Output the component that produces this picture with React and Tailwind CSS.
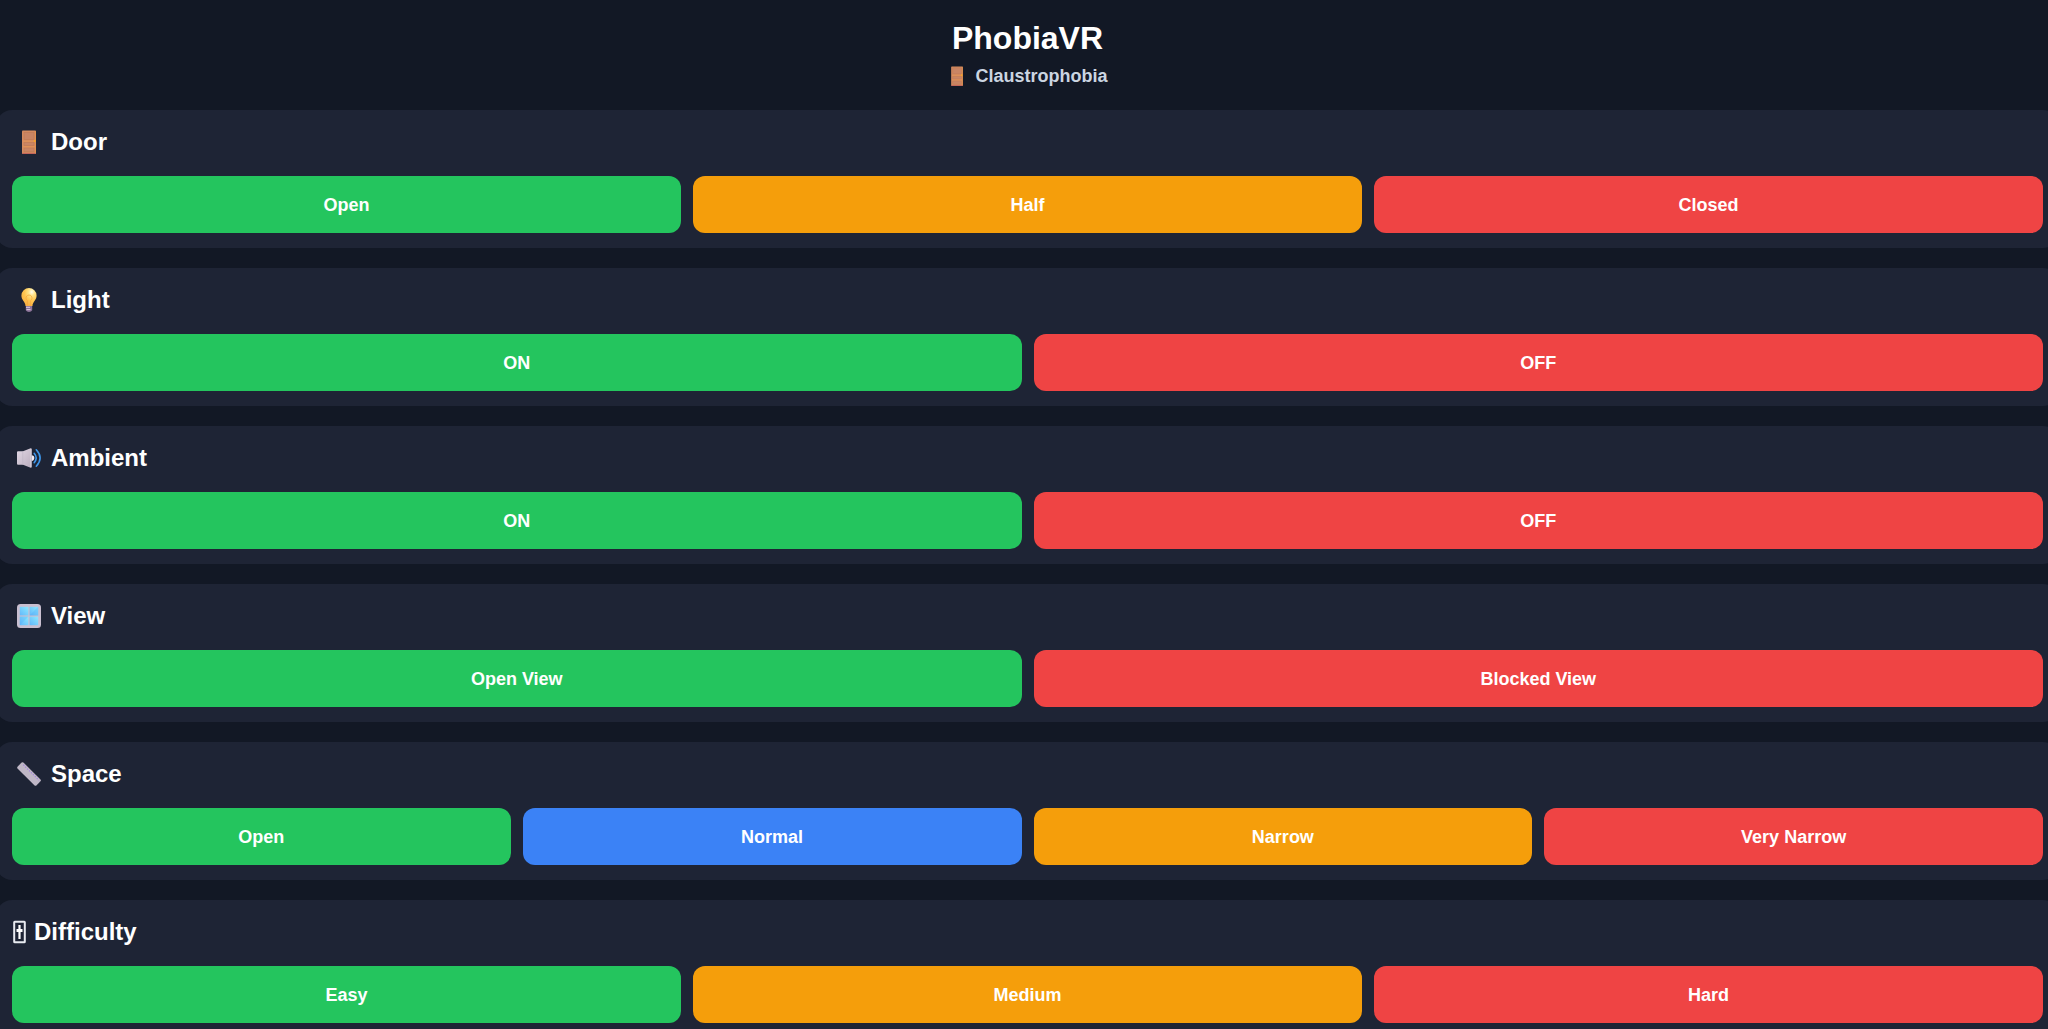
function DoorIcon({ className }) {
  return (
    <svg className={className} viewBox="0 0 24 24" aria-hidden="true">
      <rect x="5" y="0.5" width="14" height="23.5" rx="0.8" fill="#d58b60" />
      <path d="M18.4 1v22.5" stroke="#e0914f" strokeWidth="1" />
      <path d="M5.4 23.4h13.2" stroke="#c0605a" strokeWidth="1" />
      <g fill="#c98564" stroke="#bf7a55" strokeWidth="0.6">
        <rect x="7" y="2.3" width="10" height="7.2" />
        <rect x="7" y="12.6" width="10" height="3" />
        <rect x="7" y="18" width="10" height="3.8" />
      </g>
      <path d="M6 11.2h12M6 16.7h12" stroke="#e39656" strokeWidth="0.8" />
      <circle cx="17.6" cy="11" r="1" fill="#f5a623" />
    </svg>
  );
}

function BulbIcon({ className }) {
  return (
    <svg className={className} viewBox="0 0 24 24" aria-hidden="true">
      <defs>
        <radialGradient id="bulb" cx="0.68" cy="0.22" r="0.8">
          <stop offset="0" stopColor="#fffdf0" />
          <stop offset="0.25" stopColor="#ffe48a" />
          <stop offset="0.6" stopColor="#ffc550" />
          <stop offset="1" stopColor="#f9b243" />
        </radialGradient>
      </defs>
      <path d="M8.8 17h6.4v5.2q-1 1.8-3.2 1.8t-3.2-1.8z" fill="#8d7399" />
      <path d="M9 19.3h4M9.5 21.6h4" stroke="#dccde2" strokeWidth="1" />
      <path d="M12 0a7.6 7.6 0 0 1 7.6 7.6c0 4.6-3.6 5.8-4.2 10.400H8.6c-.6-4.600-4.200-5.800-4.200-10.400A7.600 7.600 0 0 1 12 0z" fill="url(#bulb)" />
      <path d="M10.400 17.800V12.600a3 3 0 1 1 3.200 0v5.200" fill="none" stroke="#f5a83f" strokeWidth="0.8" />
    </svg>
  );
}

function SpeakerIcon({ className }) {
  return (
    <svg className={className} viewBox="0 0 24 24" aria-hidden="true">
      <defs>
        <linearGradient id="speaker" x1="0" x2="1" y1="0" y2="1">
          <stop offset="0" stopColor="#e2d8e5" />
          <stop offset="1" stopColor="#b9acbd" />
        </linearGradient>
      </defs>
      <path d="M14.5 9.3a2.8 2.8 0 0 1 0 5.6z" fill="#f3ecf5" />
      <path d="M0 6.3Q0 5.3 1 5.3h5L13 2.5q1.6-.5 1.6 1v16.8q0 1.6-1.6 1.1L6 18.7H1q-1 0-1-1z" fill="url(#speaker)" />
      <path d="M5.8 5.4v13.2" stroke="#c2b6c7" strokeWidth="0.7" />
      <path d="M13.9 2.6v18.8" stroke="#d8cfdc" strokeWidth="1.2" />
      <g fill="none" stroke="#3e96ea" strokeWidth="1.6" strokeLinecap="round">
        <path d="M17.2 7.3q4 4.700 0 9.400" />
        <path d="M19.3 3.800q7.600 8.200 0 16.400" />
      </g>
    </svg>
  );
}

function WindowIcon({ className }) {
  return (
    <svg className={className} viewBox="0 0 24 24" aria-hidden="true">
      <defs>
        <linearGradient id="pane" x1="0" x2="1" y1="1" y2="0">
          <stop offset="0" stopColor="#62b8fa" />
          <stop offset="1" stopColor="#8ce8ff" />
        </linearGradient>
      </defs>
      <rect width="24" height="24" rx="3.5" fill="#c9bfd0" />
      <g fill="url(#pane)">
        <rect x="2.8" y="2.8" width="8.6" height="8.6" />
        <rect x="12.6" y="2.8" width="8.6" height="8.6" />
        <rect x="2.8" y="12.6" width="8.6" height="8.6" />
        <rect x="12.6" y="12.6" width="8.6" height="8.6" />
      </g>
      <path d="M12.6 11.4l8.6-8.6v8.6zM2.8 21.2l8.6-8.6H2.8z" fill="#4ba4f5" fillOpacity="0.25" />
    </svg>
  );
}

function RulerIcon({ className }) {
  return (
    <svg className={className} viewBox="0 0 24 24" aria-hidden="true">
      <path d="M.5 6.500Q-.2 5.600.5 4.800L4.600.6q.9-.8 1.800 0L23.500 17.500q.8.900 0 1.800l-4.100 4.100q-.9.800-1.800 0z" fill="#bfb7c6" />
      <path d="M6.4 2.8 22 18.3" stroke="#a284dc" strokeWidth="1.3" strokeDasharray="1.2 1.5" />
    </svg>
  );
}

function SliderIcon({ className }) {
  return (
    <svg className={className} viewBox="0 0 14 24" aria-hidden="true">
      <rect x="2.2" y="1.7" width="10.6" height="20.6" rx="0.5" fill="none" stroke="#e8eaf0" strokeWidth="2" />
      <path d="M7.5 5v14" stroke="#fff" strokeWidth="2.2" />
      <path d="M4.5 9h6v3h-6z" fill="#fff" />
    </svg>
  );
}

const COLORS = {
  green: "bg-[#24c55e]",
  orange: "bg-[#f59e0b]",
  red: "bg-[#ef4444]",
  blue: "bg-[#3b82f6]",
};

const COLUMNS = { 2: "grid-cols-2", 3: "grid-cols-3", 4: "grid-cols-4" };

const SECTIONS = [
  { title: "Door", Icon: DoorIcon, options: [["Open", "green"], ["Half", "orange"], ["Closed", "red"]] },
  { title: "Light", Icon: BulbIcon, options: [["ON", "green"], ["OFF", "red"]] },
  { title: "Ambient", Icon: SpeakerIcon, options: [["ON", "green"], ["OFF", "red"]] },
  { title: "View", Icon: WindowIcon, options: [["Open View", "green"], ["Blocked View", "red"]] },
  {
    title: "Space",
    Icon: RulerIcon,
    options: [["Open", "green"], ["Normal", "blue"], ["Narrow", "orange"], ["Very Narrow", "red"]],
  },
  { title: "Difficulty", Icon: SliderIcon, narrow: true, options: [["Easy", "green"], ["Medium", "orange"], ["Hard", "red"]] },
];

function Section({ title, Icon, narrow, options }) {
  return (
    <section aria-label={title} className="rounded-2xl bg-[#1e2435] px-4 pt-4 pb-[15px]">
      <h2 className={`flex h-8 items-center text-2xl font-bold text-white ${narrow ? "gap-2" : "gap-[10px] pl-[5px]"}`}>
        <Icon className={narrow ? "h-6 w-[14px]" : "size-6"} />
        {title}
      </h2>
      <div className={`mt-[18px] grid gap-3 ${COLUMNS[options.length]}`}>
        {options.map(([label, color]) => (
          <button key={label} type="button" className={`h-[57px] rounded-xl text-lg font-bold text-white ${COLORS[color]}`}>
            {label}
          </button>
        ))}
      </div>
    </section>
  );
}

export default function App() {
  return (
    <div className="min-h-screen overflow-hidden bg-[#121825] font-['Liberation_Sans',Arial,sans-serif]">
      <div className="-mr-[11px] -ml-1 pb-5">
        <header className="flex flex-col items-center gap-0.5 pt-[18px] pb-[18px]">
          <h1 className="text-[32px] leading-10 font-bold text-white">PhobiaVR</h1>
          <p className="flex h-8 items-center gap-2 text-lg font-bold text-[#cbd5e1]">
            <DoorIcon className="size-5" />
            Claustrophobia
          </p>
        </header>
        <main className="flex flex-col gap-5">
          {SECTIONS.map((section) => (
            <Section key={section.title} {...section} />
          ))}
        </main>
      </div>
    </div>
  );
}
